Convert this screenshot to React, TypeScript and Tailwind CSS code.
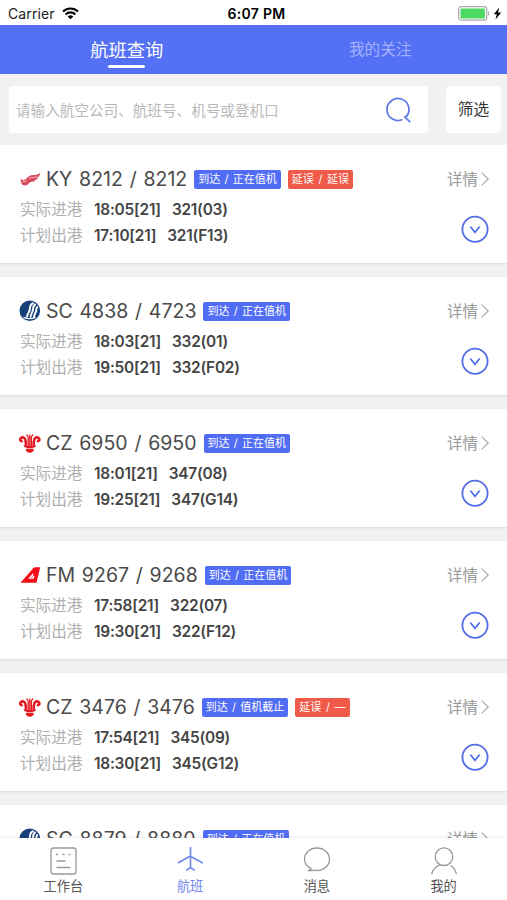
import React, { useState } from 'react';

type Airline = 'KY' | 'SC' | 'CZ' | 'FM';

interface Flight {
  airline: Airline;
  title: string;
  status: string;
  delay?: string;
  arrival: [string, string];
  departure: [string, string];
}

const FLIGHTS: Flight[] = [
  { airline: 'KY', title: 'KY 8212 / 8212', status: '到达 / 正在值机', delay: '延误 / 延误', arrival: ['18:05[21]', '321(03)'], departure: ['17:10[21]', '321(F13)'] },
  { airline: 'SC', title: 'SC 4838 / 4723', status: '到达 / 正在值机', arrival: ['18:03[21]', '332(01)'], departure: ['19:50[21]', '332(F02)'] },
  { airline: 'CZ', title: 'CZ 6950 / 6950', status: '到达 / 正在值机', arrival: ['18:01[21]', '347(08)'], departure: ['19:25[21]', '347(G14)'] },
  { airline: 'FM', title: 'FM 9267 / 9268', status: '到达 / 正在值机', arrival: ['17:58[21]', '322(07)'], departure: ['19:30[21]', '322(F12)'] },
  { airline: 'CZ', title: 'CZ 3476 / 3476', status: '到达 / 值机截止', delay: '延误 / ––', arrival: ['17:54[21]', '345(09)'], departure: ['18:30[21]', '345(G12)'] },
  { airline: 'SC', title: 'SC 8879 / 8880', status: '到达 / 正在值机', arrival: ['17:52[21]', '331(02)'], departure: ['18:40[21]', '331(F05)'] },
];

const AirlineLogo: React.FC<{ airline: Airline }> = ({ airline }) => {
  if (airline === 'KY') {
    return (
      <svg className="w-[22px] h-[22px] shrink-0" viewBox="0 0 22 22">
        <path d="M1.800 10.300c1 1.600 2.100 2.200 3.600 1.700C7.500 11.200 8.300 8.700 11 7.700c3-1 7 0 10.200-2.600-.3 2.400-1.400 3.900-3.300 4.800.5.200 1 .1 1.500-.1-1 1.500-2.400 2.200-4.200 2.300.3.300.8.400 1.300.3-1.500 1.300-3 1.100-4.700 1.600-2 .6-2.600 3.500-6 3.500-2.700 0-4.500-2.500-4-7.200Z" fill="#d94b5c" />
        <path d="M10 10.300c2.600-1.200 5.200-.4 8-1.600M3.800 13.500c1.500.6 3 .2 4.200-1.200" stroke="#fff" strokeWidth=".6" fill="none" />
      </svg>
    );
  }
  if (airline === 'SC') {
    return (
      <svg className="w-[22px] h-[22px] shrink-0" viewBox="0 0 22 22">
        <circle cx="10.800" cy="10.700" r="10.300" fill="#17417a" />
        <path d="M8.300 17.700c-1.400-3 2.800-5.500 2.600-9 0-2.500 1.200-4.700 3.700-5.800M11.800 17.700c-1.300-3 2.500-5.300 2.300-8.700-.1-2.100.8-3.900 2.600-4.900M15.200 17.400c-.8-2.700 2.200-4.500 2.100-7.300 0-1.400.4-2.700 1.500-3.500" stroke="#fff" strokeWidth="1.900" fill="none" />
        <path d="M4.500 17.200c3.500 1.900 8 1.900 12 .2" stroke="#fff" strokeWidth="1.200" fill="none" />
      </svg>
    );
  }
  if (airline === 'CZ') {
    return (
      <svg className="w-[22px] h-[22px] shrink-0" viewBox="0 0 22 22" fill="none" stroke="#e3171f">
        <path d="M7 13.500C7 9.500 6.300 6 4.500 5.500 2.500 5.100 1 6.500 1.200 8c.3 1 1.500 1.300 2.500.8M14.600 13.500c0-4 .5-7.500 2.500-8 2-.4 3.500 1 3.300 2.500-.3 1-1.500 1.300-2.500.8" strokeWidth="2.600" />
        <path d="M9.200 14V5L7.500 2.500M12.400 14V5l1.700-2.500M10.800 14V2.500" strokeWidth="1.300" />
        <path d="M5.500 13.200c.5 1.300 2.300 2 5.300 2s4.800-.7 5.300-2" strokeWidth="2.200" />
        <path d="M6.800 16.700h8c0 2.500-1.500 4-4 4s-4-1.500-4-4Z" fill="#e3171f" stroke="none" />
      </svg>
    );
  }
  return (
    <svg className="w-[22px] h-[22px] shrink-0" viewBox="0 0 22 22">
      <path d="M1.500 18.800 14.200 4.300c.8-.8 1.500-1.100 2.600-1.100h4.400L17.500 18.800h-16Z" fill="#f20d18" />
      <path d="m9.200 14.800 5.400-6.200-.8 3.100h1.800l-.9 3.100H9.200Z" fill="#fff" />
      <path d="m12 14 1.800-2.300-.5 2.300H12Z" fill="#f20d18" />
    </svg>
  );
};

const FlightTime: React.FC<{ label: string; value: [string, string] }> = ({ label, value }) => (
  <div className="flex h-[26px] items-center tracking-[-0.22px]">
    <span className="w-[74px] tracking-normal text-[15.600px] text-[#b0b0b0]">{label}</span>
    <span className="text-[15.400px] font-semibold text-[#444444]">{value[0]}</span>
    <span className="ml-[11px] text-[15.400px] font-semibold text-[#444444]">{value[1]}</span>
  </div>
);

const FlightCard: React.FC<{ flight: Flight }> = ({ flight }) => (
  <article className="flex h-[118px] shrink-0 bg-white pl-5 pr-[18px] pt-[18px] shadow-[0_1px_3px_rgba(0,0,0,0.1)]">
    <div className="flex-1">
      <div className="flex h-8 items-center">
        <div className="-ml-px mr-[5px]">
          <AirlineLogo airline={flight.airline} />
        </div>
        <h2 className="pt-px text-[19.500px] tracking-[0.02px] [word-spacing:1.200px] text-[#4a4a4a]">{flight.title}</h2>
        <span className="ml-[7px] h-[19px] rounded-[2px] bg-[#526df5] px-1 text-[11px] leading-[19px] [word-spacing:1.200px] text-white">{flight.status}</span>
        {flight.delay && (
          <span className="ml-[7px] h-[19px] rounded-[2px] bg-[#ef5a49] px-1 text-[11px] leading-[19px] [word-spacing:1.500px] text-white">{flight.delay}</span>
        )}
      </div>
      <div className="mt-[2px]">
        <FlightTime label="实际进港" value={flight.arrival} />
        <FlightTime label="计划出港" value={flight.departure} />
      </div>
    </div>
    <div className="flex flex-col items-end">
      <button className="flex h-8 items-center gap-[3px] text-[15.500px] text-[#999999]">
        <span className="pt-px">详情</span>
        <svg className="h-[14px] w-2" viewBox="0 0 8 14" fill="none" stroke="#a5a5a5" strokeWidth="1.100">
          <path d="m.7.7 6.500 6.300L.7 13.300" />
        </svg>
      </button>
      <svg className="mt-[20px] h-7 w-7" viewBox="0 0 28 28" fill="none" stroke="#526de8">
        <circle cx="14" cy="14.300" r="12.600" strokeWidth="1.800" />
        <path d="m9.300 11.500 4.700 5.800 4.700-5.800" strokeWidth="1.700" />
      </svg>
    </div>
  </article>
);

const StatusBar: React.FC = () => (
  <div className="grid h-[25px] shrink-0 grid-cols-3 items-center bg-white pl-2 pr-1 text-[14px] text-[#1a1a1a]">
    <div className="flex items-center gap-[7px] pt-px">
      <span className="tracking-[0.1px]">Carrier</span>
      <svg className="h-[13px] w-[17px]" viewBox="0 0 17 13" fill="none" stroke="#000">
        <path d="M1 4.600a10.700 10.700 0 0 1 15 0M3.600 7.400a7 7 0 0 1 9.800 0" strokeWidth="2.100" />
        <path d="M8.500 12.300 5.700 9.500a4 4 0 0 1 5.600 0Z" fill="#000" stroke="none" />
      </svg>
    </div>
    <span className="pl-[2px] pt-px text-center font-semibold tracking-[0.300px] text-black">6:07 PM</span>
    <div className="flex items-center justify-end gap-[3px] pr-px pt-px">
      <svg className="h-[15px] w-8" viewBox="0 0 32 15">
        <rect x=".7" y=".7" width="28" height="13.500" rx="2.800" fill="#fff" stroke="#aaa" strokeWidth="1.200" />
        <rect x="2.500" y="2.500" width="24.400" height="9.900" rx="1" fill="#4cd964" />
        <path d="M30 5.200c1.700.6 1.700 3.900 0 4.500Z" fill="#aaa" />
      </svg>
      <svg className="h-[13px] w-[9px]" viewBox="0 0 9 13">
        <path d="M6.200.5.800 7.200h3L2.500 12.500 8.200 5.500H5L6.200.5Z" fill="#000" />
      </svg>
    </div>
  </div>
);

const TABS = [
  {
    label: '工作台',
    icon: (
      <>
        <rect x="2" y="1" width="25" height="26" rx="2.500" />
        <path d="M7 7.500h2M13.500 7.500h2M19.500 7.500h2M7.500 14h9M7.500 20.500h14" />
      </>
    ),
  },
  {
    label: '航班',
    icon: <path d="M14.500 0v21M13.800 9.200 2 16M15.200 9.700l11.600 6.300M10.100 23.300l4.400-2.800 4.400 2.800" strokeWidth="1.600" />,
  },
  {
    label: '消息',
    icon: <path d="M8.200 21.700C4 19.700 1.500 16.300 1.500 12.300 1.500 6 7 1 14 1s12.500 5 12.500 11.300S21 23.500 14 23.500c-1.200 0-2.300-.1-3.300-.4-1.700.5-3.600.7-5.900.5 1.600-.3 2.800-.9 3.400-1.900Z" />,
  },
  {
    label: '我的',
    icon: (
      <>
        <circle cx="14" cy="9.700" r="8.800" />
        <path d="M10 17.900C5.500 19.700 2.500 23 1.600 27.200M20.500 18.500c3 1.700 5.100 4.700 5.900 8.700" />
      </>
    ),
  },
];

const App: React.FC = () => {
  const [activeTab, setActiveTab] = useState('航班');

  return (
    <div className="flex h-[900px] w-full flex-col overflow-hidden bg-[#f1f1f1] font-['Inter','Noto_Sans_CJK_SC',sans-serif]">
      <StatusBar />

      {/* Header */}
      <header className="grid h-[49px] shrink-0 grid-cols-2 bg-[#5470f5] text-center">
        <div className="flex flex-col items-center pt-[11px]">
          <span className="text-[18.300px] leading-[28px] text-white">航班查询</span>
          <span className="mt-px h-[3px] w-[37px] rounded-full bg-white" />
        </div>
        <span className="pt-[11px] text-[15.700px] leading-[28px] text-[#a3b2fb]">我的关注</span>
      </header>

      {/* Search */}
      <div className="flex h-[71px] shrink-0 gap-[18px] pl-[9px] pr-[6px] pt-3">
        <div className="flex h-[47px] flex-1 items-center justify-between rounded-[3px] bg-white pl-[7px] pr-[16px]">
          <span className="pt-[4px] text-[14.600px] text-[#b9b9b9]">请输入航空公司、航班号、机号或登机口</span>
          <svg className="h-[26px] w-[26px]" viewBox="0 0 26 26" fill="none" stroke="#6079e6" strokeWidth="1.700">
            <path d="M16.500 22.500A11 11 0 1 1 19.800 20.200M18.200 19.300l6 5.800" />
          </svg>
        </div>
        <button className="h-[47px] w-[55px] rounded-[5px] bg-white pt-px text-[15.700px] text-[#333333]">筛选</button>
      </div>

      {/* Flight list */}
      <main className="flex min-h-0 flex-1 flex-col gap-[14px] overflow-hidden">
        {FLIGHTS.map((flight, i) => (
          <FlightCard key={i} flight={flight} />
        ))}
      </main>

      {/* Tab bar */}
      <nav className="z-10 grid h-[62px] shrink-0 grid-cols-4 bg-white shadow-[0_-1px_3px_rgba(0,0,0,0.08)]">
        {TABS.map(tab => (
          <button
            key={tab.label}
            onClick={() => setActiveTab(tab.label)}
            className={`flex flex-col items-center pt-[9px] ${activeTab === tab.label ? 'text-[#7186ee]' : 'text-[#999999]'}`}
          >
            <svg className="h-[29px] w-7" viewBox="0 0 28 29" fill="none" stroke="currentColor" strokeWidth="1.300">
              {tab.icon}
            </svg>
            <span className={`text-[13.200px] leading-5 ${activeTab === tab.label ? '' : 'text-[#555555]'}`}>{tab.label}</span>
          </button>
        ))}
      </nav>
    </div>
  );
};

export default App;
